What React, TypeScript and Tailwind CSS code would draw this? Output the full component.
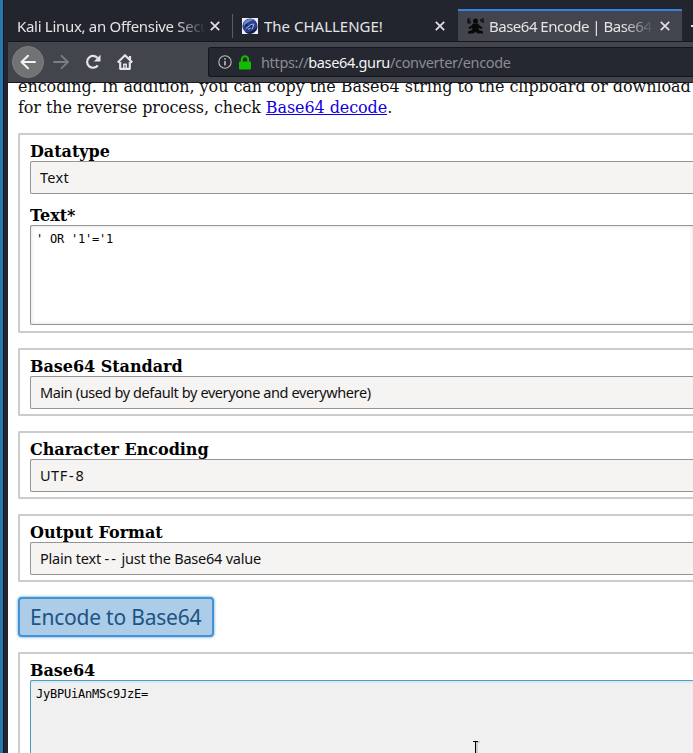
import React from "react";

function Tab({ title, width, fade, track }: { title: string; width: string; fade?: boolean; track: string }) {
  return (
    <span
      className={`${width} ${track} h-[24px] shrink-0 overflow-hidden whitespace-nowrap text-[15px] leading-[24px] ${
        fade ? "[mask-image:linear-gradient(to_right,black_calc(100%-30px),transparent)]" : ""
      }`}
    >
      {title}
    </span>
  );
}

function Close() {
  return (
    <svg className="h-[10px] w-[10px] shrink-0" viewBox="0 0 10 10" fill="none" stroke="#e2e2e4" strokeWidth="1.7">
      <path d="M.8.8l8.4 8.4M9.2.8L.8 9.2" />
    </svg>
  );
}

function Select({ value, track }: { value: React.ReactNode; track: string }) {
  return (
    <div className="flex h-[33px] items-center rounded-l-[2px] border border-r-0 border-[#959595] bg-[#f5f4f3] pl-[9px]">
      <span className={`font-['Noto_Sans',sans-serif] text-[14.5px] whitespace-nowrap text-[#111] ${track}`}>{value}</span>
    </div>
  );
}

function Fieldset({ className = "", children }: { className?: string; children: React.ReactNode }) {
  return (
    <div className={`ml-[10px] rounded-l-[2px] border-2 border-r-0 border-[#ccc] pl-[10px] ${className}`}>{children}</div>
  );
}

function Label({ children }: { children: React.ReactNode }) {
  return (
    <div className="h-[20px] pt-px text-[16px] leading-[20px] font-bold tracking-[-0.03px] whitespace-nowrap">{children}</div>
  );
}

export default function App() {
  return (
    <div className="flex h-[753px] w-[693px] overflow-hidden bg-[#22252e]">
      <div className="w-[3px] shrink-0 bg-[#2878ac]" />
      <div className="w-[5px] shrink-0 border-l border-[#111827] bg-[#22252e]" />
      <div className="flex w-[685px] shrink-0 flex-col overflow-hidden">
        <div className="flex h-[42px] shrink-0 items-end border-b border-[#15171d] bg-[#23252e] font-['Noto_Sans',sans-serif] text-[#e4e4e6]">
          <div className="flex h-[31px] w-[225px] shrink-0 items-center pl-[9px]">
            <Tab title="Kali Linux, an Offensive Security" width="w-[189px]" fade track="tracking-[-0.3px]" />
            <span className="ml-[4px] flex"><Close /></span>
            <span className="ml-[12px] h-[24px] w-px shrink-0 bg-[#5b5d65]" />
          </div>
          <div className="flex h-[31px] w-[225px] shrink-0 items-center pl-[9px]">
            <svg className="h-4 w-4 shrink-0" viewBox="0 0 16 16">
              <path fill="#eef0f6" d="M0 0h16v16H0z" />
              <circle cx="8" cy="8" r="7.6" fill="#2b418c" />
              <path fill="#6f88c8" d="M1.5 6a7 7 0 0 1 10-4.3C9 3 5 4 2.5 8z" />
              <path fill="#111d4a" d="M3 14A7.6 7.6 0 0 0 15.5 9l-3 2-5 3z" />
              <path stroke="#9eb1df" fill="none" d="M4 10.5l5-4 3-.5-2 5.5M6 11.5l3-2" />
              <path fill="#0b163c" d="M8 8.5l2-1.2-1 3zM3 7l3-2-2 4z" />
            </svg>
            <span className="ml-[6px] flex"><Tab title="The CHALLENGE!" width="w-[162px]" track="tracking-[0px]" /></span>
            <span className="ml-[9px] flex"><Close /></span>
          </div>
          <div className="flex h-[32px] w-[224px] shrink-0 items-center border-t-2 border-[#3980e0] bg-[#43454e] pl-[9px]">
            <svg className="h-[17px] w-[17px] shrink-0" viewBox="0 0 17 17">
              <path d="M3.5 1H1v4h2V3H1M14 1v2h2.5M16 0v5" fill="none" stroke="#090909" strokeWidth="1.2" />
              <circle cx="8.5" cy="3" r="2.5" fill="#090909" />
              <path fill="#090909" d="M6 5.5h5l1.5 2 3 2-.5 1.5-3.5-1 .5 2 4 1.5v2h-5l-2.5-1.5L6 15.5H1v-2L5 12l.5-2L2 11l-.5-1.5 3-2z" />
            </svg>
            <span className="ml-[5px] flex"><Tab title="Base64 Encode | Base64" width="w-[165px]" fade track="tracking-[-0.5px]" /></span>
            <span className="ml-[6px] flex"><Close /></span>
          </div>
          <div className="flex h-[31px] w-[11px] shrink-0 items-center pl-[9px]"><span className="h-[2px] w-[2px] bg-[#e2e2e4]" /></div>
        </div>
        <div className="flex h-[41px] shrink-0 items-center border-b border-[#17191f] bg-[#43454d]">
          <div className="ml-[4px] flex h-8 w-8 shrink-0 items-center justify-center rounded-full border border-[#7b7d80] bg-[#707274]">
            <svg className="h-4 w-4" viewBox="0 0 16 16" fill="none" stroke="#f2f2f3" strokeWidth="2" strokeLinecap="round" strokeLinejoin="round">
              <path d="M15 8H1.5M8 1.8L1.5 8 8 14.2" />
            </svg>
          </div>
          <svg className="ml-[9px] h-4 w-4 shrink-0" viewBox="0 0 16 16" fill="none" stroke="#7c7e84" strokeWidth="1.8" strokeLinecap="round" strokeLinejoin="round">
            <path d="M1 8h13.5M8.5 1.8L15 8l-6.5 6.2" />
          </svg>
          <svg className="ml-[16px] h-4 w-4 shrink-0" viewBox="0 0 16 16" fill="none" stroke="#e5e5e7" strokeWidth="2.2">
            <path d="M12.8 11.3A5.9 5.9 0 1 1 12.5 4" />
            <path d="M15.5.8V7.5H8.8z" fill="#e5e5e7" stroke="none" />
          </svg>
          <svg className="ml-[16px] h-4 w-4 shrink-0" viewBox="0 0 16 16" fill="none" stroke="#e5e5e7" strokeWidth="2.2" strokeLinejoin="round">
            <path d="M.7 8.5L8 1.2l7.3 7.3M3.2 8v6.8h9.6V8M13 2v4" />
            <path d="M6.8 14v-3.8h2.4V14" strokeWidth="1.5" />
          </svg>
          <div className="ml-[75px] flex h-[30px] flex-1 items-center rounded-l-[3px] border border-r-0 border-[#14161c] bg-[#252831] pl-[9px] font-['Noto_Sans',sans-serif]">
            <svg className="h-[14px] w-[14px] shrink-0" viewBox="0 0 14 14" fill="none" stroke="#bdbec2">
              <circle cx="7" cy="7" r="6.2" strokeWidth="1.1" />
              <path d="M7 6v4.5M7 3.2v1.6" strokeWidth="1.6" />
            </svg>
            <svg className="ml-[6px] h-[15px] w-[14px] shrink-0" viewBox="0 0 14 15">
              <path d="M3.8 7V4.4a3.2 3.2 0 0 1 6.4 0V7" fill="none" stroke="#12bc00" strokeWidth="2" />
              <rect x="1" y="6.5" width="12" height="8" rx="1" fill="#12bc00" />
            </svg>
            <span className="ml-[9px] pt-px text-[14.5px] tracking-[-0.34px] whitespace-nowrap text-[#8b8c92]">
              https://<span className="text-[#f3f3f4]">base64.guru</span>/converter/encode
            </span>
          </div>
        </div>
        <div className="flex h-[670px] shrink-0 flex-col overflow-hidden bg-white font-['DejaVu_Serif',serif] text-black">
          <div className="-mt-[6px] mb-[15px] ml-[10px] h-[41px] shrink-0 text-[16px] whitespace-nowrap text-[#111]">
            <div className="h-[21px] leading-[20px] tracking-[-0.06px]">encoding. In addition, you can copy the Base64 string to the clipboard or download it</div>
            <div className="leading-[20px] tracking-[-0.09px]">for the reverse process, check <span className="text-[#1200e0] underline">Base64 decode</span>.</div>
          </div>
          <Fieldset className="h-[200px] shrink-0 pt-[6px]">
            <Label>Datatype</Label>
            <Select value="Text" track="tracking-[0.3px]" />
            <div className="h-[11px]" />
            <Label>Text*</Label>
            <div className="h-[100px] rounded-l-[2px] border border-r-0 border-[#959595] bg-white pt-[5px] pl-[5px] font-['DejaVu_Sans_Mono',monospace] text-[12px] leading-[16px] tracking-[-0.22px] whitespace-pre shadow-[inset_0_0_4px_#ddd]">' OR '1'='1</div>
          </Fieldset>
          <Fieldset className="mt-[15px] h-[68px] shrink-0 pt-[6px]">
            <Label>Base64 Standard</Label>
            <Select value="Main (used by default by everyone and everywhere)" track="tracking-[-0.4px]" />
          </Fieldset>
          <Fieldset className="mt-[15px] h-[68px] shrink-0 pt-[6px]">
            <Label>Character Encoding</Label>
            <Select value={<>UTF<span className="mx-[1.3px]">-</span>8</>} track="tracking-[0.5px]" />
          </Fieldset>
          <Fieldset className="mt-[15px] h-[68px] shrink-0 pt-[6px]">
            <Label>Output Format</Label>
            <Select value={<>Plain text <span className="tracking-[2px]">--</span> just the Base64 value</>} track="tracking-[-0.22px]" />
          </Fieldset>
          <div className="mt-[15px] ml-[10px] flex h-[40px] w-[196px] shrink-0 items-center rounded-[4px] border-2 border-[#4593d4] bg-[#adcce8] pt-[2px] pl-[10px] font-['Noto_Sans',sans-serif] text-[21px] tracking-[-0.22px] whitespace-nowrap text-[#1c5484] shadow-[0_0_3px_#4593d4]">
            Encode to Base64
          </div>
          <Fieldset className="relative mt-[15px] h-[120px] shrink-0 pt-[6px]">
            <Label>Base64</Label>
            <div className="h-[100px] rounded-l-[2px] border border-r-0 border-[#4d9fbd] bg-[#f0f0f0] pt-[5px] pl-[5px] font-['DejaVu_Sans_Mono',monospace] text-[12px] leading-[16px] tracking-[-0.22px] shadow-[inset_0_2px_1px_#dce8f2]">JyBPUiAnMSc9JzE=</div>
            <svg className="absolute top-[86px] left-[452px] h-[15px] w-[8px]" viewBox="0 0 8 15" fill="none">
              <path d="M5 2v13M5 2h3" stroke="#aaa" />
              <path d="M1 1.5h5M3.5 1.5V15" stroke="#000" />
            </svg>
          </Fieldset>
        </div>
      </div>
    </div>
  );
}
